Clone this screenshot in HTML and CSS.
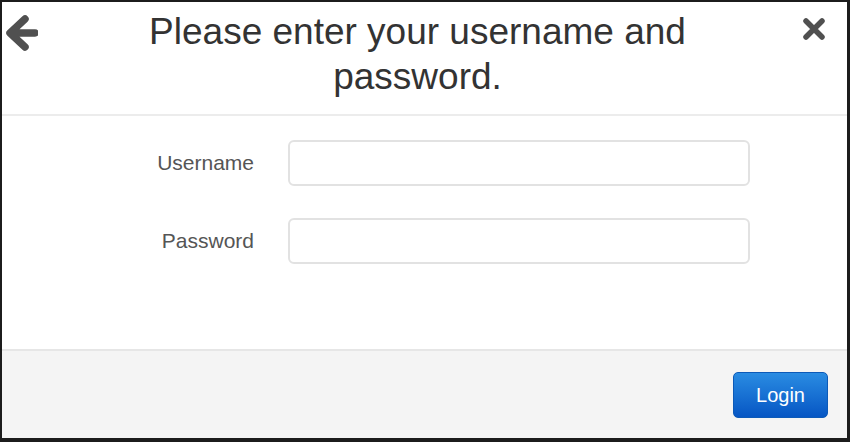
FILE: index.html
```html
<!DOCTYPE html>
<html lang="en">
<head>
  <meta charset="UTF-8">
  <title>Login</title>
  <link rel="stylesheet" href="styles.css">
</head>
<body>
<div class="dialog">
  <div class="header">
    <span class="back">
      <svg width="34" height="36" viewBox="0 0 34 36">
        <path d="M21 4 L6 18 L21 32 M7 18 H31" fill="none" stroke="#505050" stroke-width="7.5" stroke-linecap="round" stroke-linejoin="round"/>
      </svg>
    </span>
    <h1 class="title">Please enter your username and password.</h1>
    <span class="close">
      <svg width="24" height="22" viewBox="0 0 24 22">
        <path d="M4 3 L20 19 M20 3 L4 19" fill="none" stroke="#505050" stroke-width="5.5" stroke-linecap="round"/>
      </svg>
    </span>
  </div>

  <div class="content">
    <div class="form-row">
      <label for="username">Username</label>
      <input id="username" type="text">
    </div>
    <div class="form-row">
      <label for="password">Password</label>
      <input id="password" type="password">
    </div>
  </div>

  <div class="footer">
    <button class="login">Login</button>
  </div>
</div>
</body>
</html>
```

FILE: styles.css
```css
html, body {
  margin: 0;
  padding: 0;
  background: #ffffff;
}
body {
  font-family: "Liberation Sans", Arial, sans-serif;
}
.dialog {
  width: 850px;
  height: 442px;
  box-sizing: border-box;
  border: 2px solid #1c1c1c;
  border-right-width: 3px;
  border-bottom-width: 4px;
  display: flex;
  flex-direction: column;
  background: #ffffff;
}
.header {
  display: grid;
  grid-template-columns: 50px 1fr 64px;
  padding: 7px 0 15px 0;
  border-bottom: 2px solid #ececec;
}
.back {
  display: block;
  line-height: 0;
  padding-left: 2px;
  margin-top: 6px;
}
.close {
  display: block;
  line-height: 0;
  margin-top: 9px;
  padding-left: 19px;
}
.title {
  margin: 0 auto;
  max-width: 660px;
  font-size: 37px;
  line-height: 45px;
  font-weight: normal;
  color: #333333;
  text-align: center;
}
.content {
  flex: 1;
  padding-top: 24px;
  display: flex;
  flex-direction: column;
  gap: 32px;
}
.form-row {
  display: grid;
  grid-template-columns: 252px 462px;
  column-gap: 34px;
  align-items: center;
}
.form-row label {
  text-align: right;
  font-size: 21px;
  color: #555555;
}
.form-row input {
  height: 46px;
  box-sizing: border-box;
  border: 2px solid #e2e2e2;
  border-radius: 6px;
  background: #ffffff;
  padding: 6px 10px;
  font-size: 18px;
}
.footer {
  height: 89px;
  box-sizing: border-box;
  border-top: 2px solid #e6e6e6;
  background: #f4f4f4;
  display: flex;
  justify-content: flex-end;
  align-items: flex-start;
  padding: 21px 19px 0 0;
}
.login {
  width: 95px;
  height: 46px;
  border: 1px solid #0c5ab8;
  border-radius: 5px;
  background: linear-gradient(#2a8ce2, #0656c4);
  color: #ffffff;
  font-family: "Liberation Sans", Arial, sans-serif;
  font-size: 20px;
  cursor: pointer;
}
```
